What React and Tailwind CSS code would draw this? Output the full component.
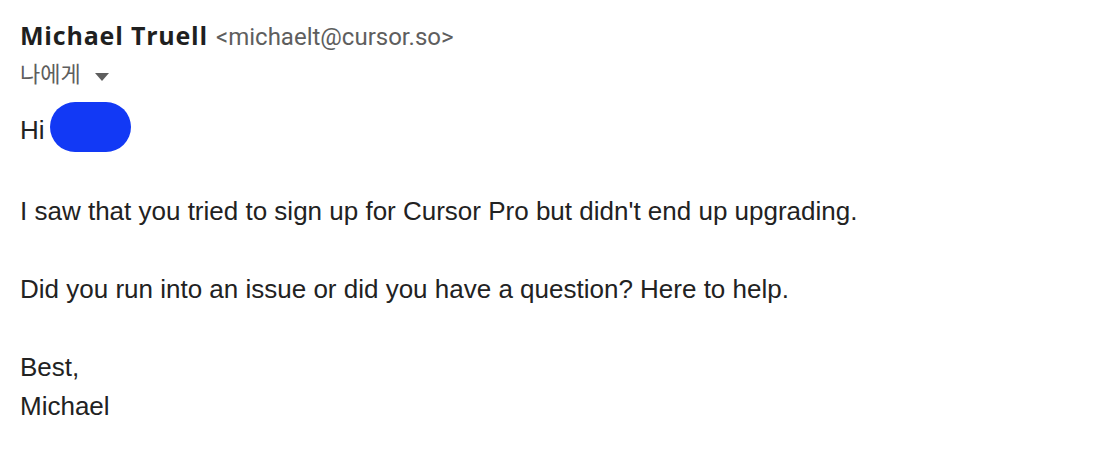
export default function App() {
  return (
    <div className="w-[1120px] h-[466px] bg-white px-5 pt-[18px]">
      <div className="flex items-baseline gap-[8px]">
        <span className="text-[25px] font-bold text-[#1f1f1f] leading-[34px] tracking-[0.8px]" style={{ fontFamily: '"Open Sans", Roboto, sans-serif' }}>
          Michael Truell
        </span>
        <span className="text-[24px] text-[#5e5e5e]" style={{ fontFamily: 'Roboto, "Noto Sans", sans-serif' }}>
          &lt;michaelt@cursor.so&gt;
        </span>
      </div>
      <div className="flex items-center gap-[14px] mt-[4px] text-[#5e5e5e]">
        <span className="text-[22px] leading-[32px]" style={{ fontFamily: 'Roboto, "Noto Sans CJK KR", sans-serif' }}>나에게</span>
        <svg width="14" height="8" viewBox="0 0 14 8" className="mt-[4px]">
          <path d="M0 0 L14 0 L7 8 Z" fill="#5e5e5e" />
        </svg>
      </div>
      <div className="mt-[11px] text-[26px] text-[#222222] leading-[39px]" style={{ fontFamily: '"Liberation Sans", Arial, sans-serif' }}>
        <div className="flex items-center h-[50px]">
          <span className="mt-[6px]">Hi</span>
          <span className="ml-[5px] w-[81px] h-[50px] rounded-full bg-[#1239f5]" />
        </div>
        <div className="mt-[40px]">I saw that you tried to sign up for Cursor Pro but didn't end up upgrading.</div>
        <div className="h-[39px]" />
        <div>Did you run into an issue or did you have a question? Here to help.</div>
        <div className="h-[39px]" />
        <div>Best,</div>
        <div>Michael</div>
      </div>
    </div>
  );
}
